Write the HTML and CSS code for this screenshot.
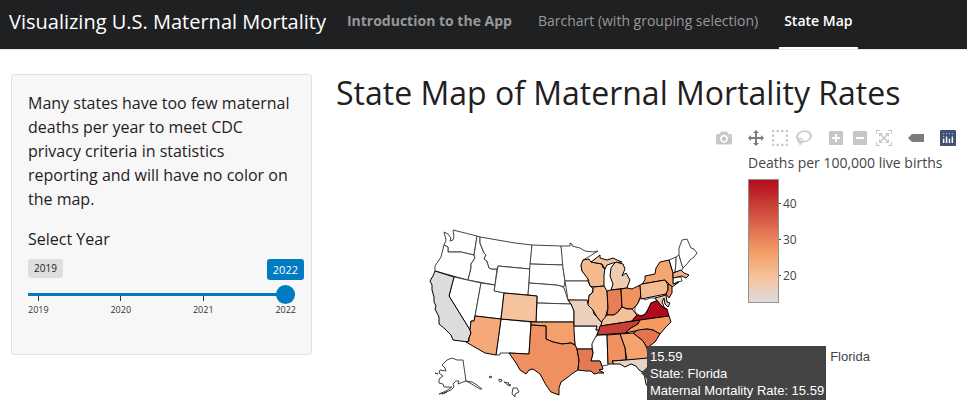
FILE: index.html
```html
<!DOCTYPE html>
<html lang="en">
<head>
<meta charset="utf-8">
<meta name="viewport" content="width=device-width, initial-scale=1">
<title>Visualizing U.S. Maternal Mortality</title>
<link rel="stylesheet" href="styles.css">
</head>
<body>
<header class="navbar">
  <a class="brand" href="#">Visualizing U.S. Maternal Mortality</a>
  <nav class="tabs">
    <a class="tab tab-strong" href="#intro">Introduction to the App</a>
    <a class="tab" href="#barchart">Barchart (with grouping selection)</a>
    <a class="tab tab-active" href="#map" aria-current="page">State Map</a>
  </nav>
</header>
<main class="page">
  <aside class="sidebar">
    <p class="note">Many states have too few maternal deaths per year to meet CDC privacy criteria in statistics reporting and will have no color on the map.</p>
    <label class="year-label" for="year">Select Year</label>
    <div class="slider">
      <div class="badges"><span class="badge">2019</span><output class="badge badge-current" for="year">2022</output></div>
      <input class="range" id="year" type="range" min="2019" max="2022" step="1" value="2022">
      <div class="ticks"><span class="tick">2019</span><span class="tick">2020</span><span class="tick">2021</span><span class="tick">2022</span></div>
    </div>
  </aside>
  <section class="content" id="map">
    <h1 class="title">State Map of Maternal Mortality Rates</h1>
    <div class="modebar">
      <div class="group">
        <button class="tool" type="button" aria-label="Download plot as a png"><svg viewBox="0 0 1000 1000"><path transform="matrix(1 0 0 -1 0 850)" d="m500 450c-83 0-150-67-150-150 0-83 67-150 150-150 83 0 150 67 150 150 0 83-67 150-150 150z m400 150h-120c-16 0-34 13-39 29l-31 93c-6 15-23 28-40 28h-340c-16 0-34-13-39-28l-31-94c-6-15-23-28-40-28h-120c-55 0-100-45-100-100v-450c0-55 45-100 100-100h800c55 0 100 45 100 100v450c0 55-45 100-100 100z m-400-550c-138 0-250 112-250 250 0 138 112 250 250 250 138 0 250-112 250-250 0-138-112-250-250-250z m365 380c-19 0-35 16-35 35 0 19 16 35 35 35 19 0 35-16 35-35 0-19-16-35-35-35z"/></svg></button>
      </div>
      <div class="group">
        <button class="tool tool-on" type="button" aria-label="Pan"><svg viewBox="0 0 1000 1000"><path transform="matrix(1 0 0 -1 0 850)" d="m1000 350l-187 188 0-125-250 0 0 250 125 0-188 187-187-187 125 0 0-250-250 0 0 125-188-188 186-187 0 125 252 0 0-250-125 0 187-188 188 188-125 0 0 250 250 0 0-126 187 188z"/></svg></button>
        <button class="tool" type="button" aria-label="Box Select"><svg viewBox="0 0 1000 1000"><path d="M0 0h143v143H0zM286 0h143v143H286zM571 0h143v143H571zM857 0h143v143H857zM0 286h143v143H0zM857 286h143v143H857zM0 571h143v143H0zM857 571h143v143H857zM0 857h143v143H0zM286 857h143v143H286zM571 857h143v143H571zM857 857h143v143H857z"/></svg></button>
        <button class="tool" type="button" aria-label="Lasso Select"><svg viewBox="0 0 1031 1000"><path transform="matrix(1 0 0 -1 0 850)" d="m1018 538c-36 207-290 336-568 286-277-48-473-256-436-463 10-57 36-108 76-151-13-66 11-137 68-183 34-28 75-41 114-42l-55-70 0 0c-2-1-3-2-4-3-10-14-8-34 5-45 14-11 34-8 45 4 1 1 2 3 2 5l0 0 113 140c16 11 31 24 45 40 4 3 6 7 8 11 48-3 100 0 151 9 278 48 473 255 436 462z m-624-379c-80 14-149 48-197 96 42 42 109 47 156 9 33-26 47-66 41-105z m-187-74c-19 16-33 37-39 60 50-32 109-55 174-68-42-25-95-24-135 8z m360 75c-34-7-69-9-102-8 8 62-16 128-68 170-73 59-175 54-244-5-9 20-16 40-20 61-28 159 121 317 333 354s407-60 434-217c28-159-121-318-333-355z"/></svg></button>
      </div>
      <div class="group">
        <button class="tool" type="button" aria-label="Zoom in"><svg viewBox="-62 0 1000 1000"><path transform="matrix(1 0 0 -1 0 850)" d="m1 787l0-875 875 0 0 875-875 0z m687-500l-187 0 0-187-125 0 0 187-188 0 0 125 188 0 0 187 125 0 0-187 187 0 0-125z"/></svg></button>
        <button class="tool" type="button" aria-label="Zoom out"><svg viewBox="-62 0 1000 1000"><path transform="matrix(1 0 0 -1 0 850)" d="m0 788l0-876 876 0 0 876-876 0z m688-500l-500 0 0 125 500 0 0-125z"/></svg></button>
        <button class="tool" type="button" aria-label="Reset"><svg viewBox="0 0 1000 1000"><path transform="matrix(1 0 0 -1 0 850)" d="m250 850l-187 0-63 0 0-62 0-188 63 0 0 188 187 0 0 62z m688 0l-188 0 0-62 188 0 0-188 62 0 0 188 0 62-62 0z m-875-938l0 188-63 0 0-188 0-62 63 0 187 0 0 62-187 0z m875 188l0-188-188 0 0-62 188 0 62 0 0 62 0 188-62 0z m-125 188l-1 0-93-94-156 156 156 156 92-93 2 0 0 250-250 0 0-2 93-92-156-156-156 156 94 92 0 2-250 0 0-250 0 0 93 93 157-156-157-156-93 94 0 0 0-250 250 0 0 0-94 93 156 157 156-157-93-93 0 0 250 0 0 250z"/></svg></button>
      </div>
      <div class="group">
        <button class="tool tool-on" type="button" aria-label="Show closest data on hover"><svg viewBox="0 0 1500 1000"><path transform="matrix(1 0 0 -1 0 850)" d="m375 725l0 0-375-375 375-374 0-1 1125 0 0 750-1125 0z"/></svg></button>
      </div>
      <div class="group">
        <a class="tool tool-brand" href="#plotly" aria-label="Produced with Plotly"><svg viewBox="0 0 132 132"><rect width="132" height="132" rx="6" fill="#3f4f75"/><g fill="#80cfbe"><circle cx="30" cy="30" r="6"/><circle cx="54" cy="30" r="6"/><circle cx="78" cy="30" r="6"/><circle cx="102" cy="30" r="6"/><circle cx="30" cy="54" r="6"/><circle cx="102" cy="54" r="6"/></g><path fill="#fff" d="M24 72h12v36H24zM48 54h12v54H48zM72 72h12v36H72zM96 60h12v48H96z"/></svg></a>
      </div>
    </div>
    <div class="plot">
      <div class="map-area">
        <svg class="map" viewBox="336 154 412 251" role="img" aria-label="Map of maternal mortality rates by state">
          <g class="empty">
            <path d="M453 230L477 236L474 255L461 252L453 252L448 252L448 247L444 245L446 240L444 232L448 234L451 238L450 241L453 240L454 236Z"/>
            <path d="M444 245L448 247L448 252L453 252L461 252L474 255L475 258L471 264L471 268L468 280L435 271L435 266L441 257Z"/>
            <path d="M477 236L480 237L480 243L484 253L486 255L484 259L487 261L489 268L492 269L497 269L495 285L468 280L471 268L471 264L475 258L474 255Z"/>
            <path d="M480 237L515 243L532 245L530 269L498 266L497 269L492 269L489 268L487 261L484 259L486 255L484 253L480 243Z"/>
            <path d="M498 266L530 269L528 295L504 293L494 291Z"/>
            <path d="M454 277L481 283L475 316L474 321L471 321L470 330L449 296Z"/>
            <path d="M481 283L495 285L494 291L504 293L501 319L475 316Z"/>
            <path d="M501 319L531 322L529 354L509 353L500 353L500 355L496 355Z"/>
            <path d="M532 245L561 246L563 257L564 265L530 264Z"/>
            <path d="M530 264L564 265L563 268L565 281L564 287L561 286L556 285L529 283Z"/>
            <path d="M529 283L556 285L561 286L564 288L568 300L571 304L537 303L537 296L528 295Z"/>
            <path d="M537 303L571 304L574 311L574 322L536 322Z"/>
            <path d="M561 246L570 246L570 243L572 244L572 246L580 248L585 251L593 252L598 251L590 256L583 260L583 263L581 265L582 271L588 278L588 281L565 281L563 268Z"/>
            <path d="M565 281L588 281L590 286L593 289L592 293L589 295L589 300L587 301L568 300Z"/>
            <path d="M573 326L597 326L596 330L599 330L595 338L592 344L592 349L577 349L575 345Z"/>
            <path d="M598 335L607 335L608 365L602 366L600 361L591 361L593 353L592 344L595 338Z"/>
            <path d="M641 297L645 300L650 298L655 298L657 301L651 303L648 309L645 314L640 316L635 312L635 307L638 303Z"/>
            <path d="M669 260L676 257L676 263L675 272L673 273L671 266Z"/>
            <path d="M676 257L679 255L682 265L683 268L681 271L675 272L676 263Z"/>
            <path d="M679 255L679 248L682 240L687 239L691 248L694 249L697 253L694 257L690 260L687 264L683 268L681 262Z"/>
            <path d="M673 277L681 277L682 281L677 282L673 285Z"/>
            <path d="M466 381L463 360L457 360L452 358L447 360L442 365L445 368L446 371L440 370L439 373L443 376L439 379L439 383L443 384L444 387L448 387L452 387L446 391L439 394L444 393L451 390L454 387L453 384L456 381L459 381L458 384L463 382ZM466 381L472 382L477 385L482 389L480 389L475 386L470 383ZM435 373L438 374ZM442 394L447 392ZM490 376L492 377L491 378L489 377ZM499 379L502 380L501 382L499 381ZM504 382L509 383L508 384L511 385L509 386ZM513 388L517 388L519 392L515 394L515 397L512 394Z"/>
          </g>
          <g class="filled">
            <path fill="#dcdcdc" d="M435 271L454 277L449 296L470 330L471 333L469 338L468 342L453 340L451 335L445 329L439 324L439 317L435 309L436 306L434 302L434 297L432 290L432 285L430 281L433 276Z"/>
            <path fill="#f5a978" d="M475 316L501 319L496 355L485 353L466 342L469 341L469 338L471 333L470 330L471 321L474 321Z"/>
            <path fill="#f5c39d" d="M504 293L537 296L536 322L501 319Z"/>
            <path fill="#f3a06c" d="M531 322L574 322L574 330L575 345L571 343L562 344L553 342L546 339L546 326L531 325Z"/>
            <path fill="#ee9060" d="M531 325L546 326L546 339L553 342L562 344L571 343L575 345L577 349L579 360L578 370L573 373L568 377L561 382L559 388L559 395L551 392L546 385L540 374L533 369L529 370L526 374L520 370L516 363L509 353L529 354Z"/>
            <path fill="#e47a54" d="M577 349L592 349L593 353L591 361L600 361L602 366L603 369L599 370L604 373L598 373L594 374L591 371L586 371L578 370L579 360Z"/>
            <path fill="#ecd0be" d="M568 300L587 300L588 304L593 310L594 314L597 317L602 323L599 330L596 330L597 326L574 326L574 311L571 304Z"/>
            <path fill="#f5b98e" d="M583 260L589 259L591 262L602 264L603 268L605 268L604 275L604 286L593 287L590 286L588 279L582 271L581 265Z"/>
            <path fill="#f5c09a" d="M591 262L595 259L600 255L600 258L607 260L613 258L617 260L622 262L613 263L607 265L605 269L602 264Z"/>
            <path fill="#efcbb0" d="M613 265L616 262L623 264L625 269L622 276L626 273L630 280L628 285L627 288L611 290L613 284L610 276L611 268Z"/>
            <path fill="#f5b78a" d="M593 287L604 286L607 291L608 308L606 315L605 321L602 323L597 317L593 310L588 305L589 296L593 292Z"/>
            <path fill="#e57f58" d="M607 291L611 290L621 289L622 307L618 312L614 315L607 315L608 308Z"/>
            <path fill="#f2935f" d="M621 289L627 288L632 289L640 285L641 295L638 303L635 307L632 309L627 309L622 307Z"/>
            <path fill="#f4c19c" d="M607 315L614 315L618 312L622 307L627 309L632 309L637 315L632 321L601 326L602 321Z"/>
            <path fill="#c9403a" d="M600 326L640 320L638 324L631 328L625 333L597 335L599 330Z"/>
            <path fill="#b20a1c" d="M632 321L637 315L643 316L647 312L651 303L656 301L660 302L661 306L667 309L669 316L640 320Z"/>
            <path fill="#f4995f" d="M640 320L669 316L671 322L665 328L660 334L653 330L647 329L635 331L625 333L631 328L638 324Z"/>
            <path fill="#e27550" d="M633 333L638 330L647 329L653 330L660 334L655 342L647 348L643 341Z"/>
            <path fill="#f5a36d" d="M620 334L633 333L643 341L647 348L648 358L627 361L625 348Z"/>
            <path fill="#f0925f" d="M607 335L620 334L625 348L626 360L612 361L614 364L608 364Z"/>
            <path fill="#e8d3c5" d="M612 361L626 360L648 358L651 367L657 378L658 390L652 394L646 384L644 373L639 370L636 366L631 364L625 367L620 364L614 364Z"/>
            <path fill="#f5a56f" d="M642 284L645 280L645 276L655 274L656 268L660 262L669 260L671 267L673 273L673 284L679 282L672 287L665 280Z"/>
            <path fill="#f5bb90" d="M640 285L642 284L665 280L668 285L668 290L666 294L641 299Z"/>
            <path fill="#ee8a5c" d="M668 284L672 286L672 293L669 298L666 294L668 290Z"/>
            <path fill="#f3b084" d="M673 273L681 270L684 273L689 275L686 278L682 276L673 278Z"/>
            <path fill="#ecc6aa" d="M655 298L666 295L667 302L670 303L668 307L665 304L664 298L662 302L665 309L660 304Z"/>
          </g>
        </svg>
        <div class="hover" role="tooltip">
          <div class="hover-box">15.59<br>State: Florida<br>Maternal Mortality Rate: 15.59</div>
          <span class="hover-name">Florida</span>
        </div>
      </div>
      <div class="legend">
        <div class="legend-title">Deaths per 100,000 live births</div>
        <svg class="colorbar" viewBox="0 0 60 126" role="img" aria-label="Color scale">
          <defs><linearGradient id="scale" x1="0" y1="1" x2="0" y2="0"><stop offset="0" stop-color="#dcdcdc"/><stop offset=".2" stop-color="#f5c39d"/><stop offset=".4" stop-color="#f5a069"/><stop offset="1" stop-color="#b20a1c"/></linearGradient></defs>
          <rect class="bar" x="0.5" y="1.5" width="30" height="123"/>
          <path class="mark" d="M31 25.5h2M31 61.5h2M31 97.5h2"/>
          <text x="35" y="30">40</text><text x="35" y="66">30</text><text x="35" y="102">20</text>
        </svg>
      </div>
    </div>
  </section>
</main>
</body>
</html>
```
FILE: styles.css
```css
* { box-sizing: border-box; }

body {
  margin: 0;
  background: #fff;
  color: #1f2022;
  font: 16px/24px "Open Sans", sans-serif;
}

a { color: inherit; text-decoration: none; }

.navbar {
  display: flex;
  align-items: stretch;
  gap: 16px;
  height: 50px;
  padding: 0 9px;
  background: #1f2022;
  border-bottom: 1px solid #e8e8e8;
}

.brand {
  align-self: center;
  padding-bottom: 6px;
  color: #fff;
  font-size: 20px;
  white-space: nowrap;
}

.tabs { display: flex; gap: 16px; }

.tab {
  display: flex;
  align-items: center;
  padding: 0 5px 6px;
  border-bottom: 2px solid transparent;
  color: #989898;
  font-size: 14px;
  white-space: nowrap;
}

.tab-strong { font-weight: 700; }

.tab-active {
  border-bottom-color: #fff;
  color: #fff;
  font-weight: 600;
}

.page {
  display: grid;
  grid-template-columns: 301px 1fr;
  align-items: start;
  gap: 24px;
  padding: 24px 7px 0 11px;
}

.sidebar {
  min-height: 281px;
  padding: 16px;
  background: #f7f7f7;
  border: 1px solid #e2e2e2;
  border-radius: 3px;
}

.note { margin: 0 0 16px; }

.year-label { display: block; margin-bottom: 8px; }

.badges {
  display: flex;
  justify-content: space-between;
  align-items: flex-start;
  height: 25px;
  margin-right: -9px;
}

.badge {
  padding: 2px 6px;
  background: #dedede;
  border-radius: 3px;
  font-size: 10px;
  line-height: 15px;
}

.badge-current {
  background: #007bc2;
  color: #fff;
  font-size: 11px;
  line-height: 17px;
}

.range {
  display: block;
  width: 100%;
  height: 20px;
  margin: 0;
  appearance: none;
  background: linear-gradient(#007bc2, #007bc2) center / 100% 3px no-repeat;
}

.range::-webkit-slider-thumb {
  width: 19px;
  height: 19px;
  appearance: none;
  background: #007bc2;
  border-radius: 50%;
}

.ticks {
  display: flex;
  justify-content: space-between;
  margin: -8px -1px 0 0;
}

.tick {
  color: #333;
  font-size: 9px;
  line-height: 17px;
}

.tick::before {
  display: block;
  width: 1px;
  height: 5px;
  margin: 0 auto;
  background: #333;
  content: "";
}

.tick:last-child::before { background: transparent; }

.title {
  margin: 0 0 16px;
  font-size: 32px;
  font-weight: 400;
  line-height: 38px;
}

.modebar {
  display: flex;
  justify-content: flex-end;
  gap: 8px;
}

.group { display: flex; }

.tool {
  display: block;
  padding: 2px 4px;
  border: 0;
  background: none;
  fill: #c7c7c7;
}

.tool-on { fill: #7c7c7c; }

.tool svg { display: block; width: 16px; height: 16px; }

.plot { display: flex; padding-top: 6px; }

.map-area { position: relative; flex: none; width: 412px; }

.map { display: block; width: 100%; }

.map path { stroke-width: 1; stroke-linejoin: round; }

.empty { fill: #fff; stroke: #444; }

.filled { stroke: #000; }

.hover {
  position: absolute;
  top: 192px;
  left: 311px;
  display: flex;
  gap: 4px;
  font: 13px/17px "Liberation Sans", Arial, sans-serif;
  white-space: nowrap;
}

.hover::before {
  position: absolute;
  top: 21px;
  left: -6px;
  border: 6px solid transparent;
  border-right-color: #444;
  border-left: 0;
  content: "";
}

.hover-box {
  padding: 2px 2px 1px 3px;
  background: #444;
  color: #fff;
}

.hover-name { padding-top: 2px; color: #444; }

.legend { flex: 1; color: #444; }

.legend-title {
  font-size: 14px;
  line-height: 18px;
  white-space: nowrap;
}

.colorbar {
  display: block;
  width: 60px;
  height: 126px;
  margin-top: 6px;
  font-size: 12px;
  fill: #444;
}

.bar { fill: url(#scale); stroke: #929292; stroke-width: 1; }

.mark { stroke: #444; }
```
